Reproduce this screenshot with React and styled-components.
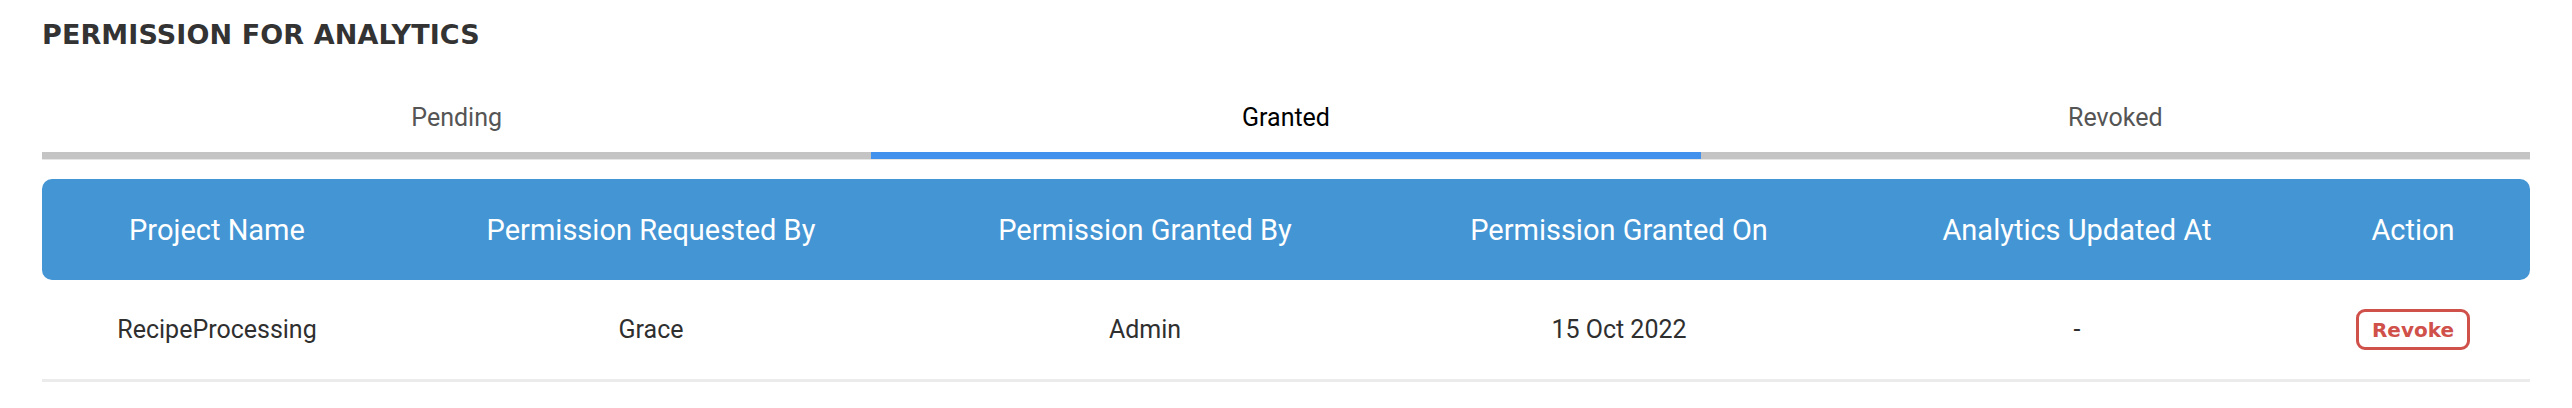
import React from 'react';
import styled, { createGlobalStyle } from 'styled-components';

const GlobalStyle = createGlobalStyle`
    body {
        margin: 0;
        background: #ffffff;
        font-family: Roboto, "Liberation Sans", sans-serif;
    }
`

const Page = styled.div`
    display: flex;
    flex-direction: column;
    padding: 0 42px;
    width: 2572px;
    box-sizing: border-box;
`

const Title = styled.h1`
    margin: 19px 0 0 0;
    font-family: "DejaVu Sans", sans-serif;
    font-weight: 700;
    font-size: 27px;
    letter-spacing: 0.1px;
    line-height: 32px;
    color: #333333;
`

const TabList = styled.div`
    display: grid;
    grid-template-columns: repeat(3, 1fr);
    margin-top: 33px;
    border-bottom: 1px solid #e6e6e6;
`

const Tab = styled.div`
    display: flex;
    justify-content: center;
    padding: 20px 0;
    font-size: 25px;
    line-height: 28px;
    color: ${props => props.active ? '#000000' : '#555555'};
    border-bottom: 7px solid ${props => props.active ? '#4291ed' : '#c4c4c4'};
`

const Table = styled.div`
    display: flex;
    flex-direction: column;
    margin-top: 19px;
`

const columns = '350px 518px 470px 478px 438px 234px';

const HeaderRow = styled.div`
    display: grid;
    grid-template-columns: ${columns};
    height: 101px;
    background-color: #4395d4;
    border-radius: 10px;
`

const HeaderCell = styled.div`
    display: flex;
    align-items: center;
    justify-content: center;
    font-size: 29px;
    color: #ffffff;
`

const BodyRow = styled.div`
    display: grid;
    grid-template-columns: ${columns};
    height: 99px;
    border-bottom: 3px solid #ebebeb;
`

const Cell = styled.div`
    display: flex;
    align-items: center;
    justify-content: center;
    font-size: 25px;
    color: #2f2f2f;
`

const RevokeButton = styled.button`
    display: flex;
    align-items: center;
    justify-content: center;
    width: 114px;
    height: 41px;
    padding: 0;
    background: #ffffff;
    border: 3px solid #d0504a;
    border-radius: 9px;
    font-family: "DejaVu Sans", sans-serif;
    font-weight: 700;
    font-size: 20px;
    color: #d0504a;
    cursor: pointer;
`

const headers = [
    'Project Name',
    'Permission Requested By',
    'Permission Granted By',
    'Permission Granted On',
    'Analytics Updated At',
    'Action',
];

const rows = [
    { project: 'RecipeProcessing', requestedBy: 'Grace', grantedBy: 'Admin', grantedOn: '15 Oct 2022', updatedAt: '-' },
];

export default function App() {
    return (
        <Page>
            <GlobalStyle />
            <Title>PERMISSION FOR ANALYTICS</Title>
            <TabList>
                <Tab>Pending</Tab>
                <Tab active>Granted</Tab>
                <Tab>Revoked</Tab>
            </TabList>
            <Table>
                <HeaderRow>
                    {headers.map(h => <HeaderCell key={h}>{h}</HeaderCell>)}
                </HeaderRow>
                {rows.map(r => (
                    <BodyRow key={r.project}>
                        <Cell>{r.project}</Cell>
                        <Cell>{r.requestedBy}</Cell>
                        <Cell>{r.grantedBy}</Cell>
                        <Cell>{r.grantedOn}</Cell>
                        <Cell>{r.updatedAt}</Cell>
                        <Cell><RevokeButton>Revoke</RevokeButton></Cell>
                    </BodyRow>
                ))}
            </Table>
        </Page>
    );
}
